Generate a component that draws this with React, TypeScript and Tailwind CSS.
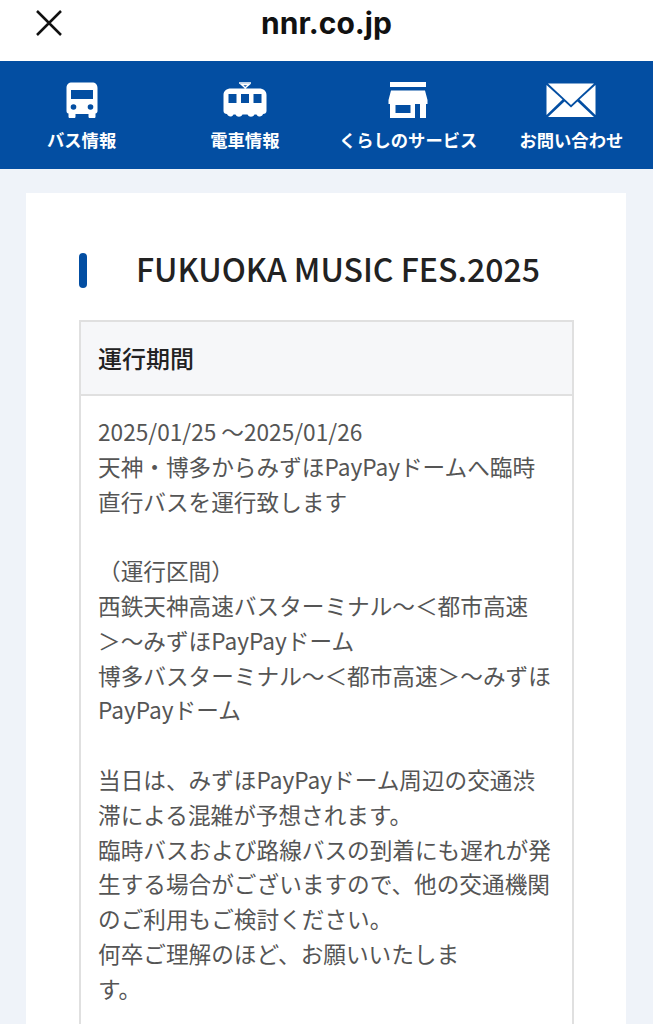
import React from "react";

const cjk = "font-['Noto_Sans_CJK_JP','Noto_Sans',sans-serif]";

function Bus() {
  return (
    <svg width="32" height="37" viewBox="0 0 32 37" fill="none">
      <path d="M6 0.500H26C29.500 0.500 31.500 2.500 31.500 6V29C31.500 30.500 30.500 31.500 29.500 31.500V34.500C29.500 35.500 29 36 28 36H24C23 36 22.500 35.500 22.500 34.500V32H9.500V34.500C9.500 35.500 9 36 8 36H4C3 36 2.500 35.500 2.500 34.500V31.500C1.200 31.500 0.500 30.500 0.500 29V6C0.500 2.500 2.500 0.500 6 0.500Z" fill="white" />
      <rect x="5" y="8" width="22" height="9" fill="#034ea2" />
      <circle cx="7.500" cy="25" r="2.800" fill="#034ea2" />
      <circle cx="24.500" cy="25" r="2.800" fill="#034ea2" />
    </svg>
  );
}

function Train() {
  return (
    <svg width="44" height="37" viewBox="0 0 44 37" fill="none">
      <path d="M21.500 6.500L26 2.500H18.500L23 6.500" stroke="white" strokeWidth="1.500" />
      <path d="M16 1H28" stroke="white" strokeWidth="1.500" />
      <path d="M8 6.500H36C40.500 6.500 43.500 9 43.500 13V29C43.500 31 42 32 40 32C39.500 35 35 35.500 33.500 32.500H31.500C30 35.500 26 35.500 24.500 32.500H19.500C18 35.500 14 35.500 12.500 32.500H10.500C9 35.500 5 35 4 32C2 32 0.500 31 0.500 29V13C0.500 9 3.500 6.500 8 6.500Z" fill="white" />
      <rect x="5.500" y="12" width="8" height="9" fill="#034ea2" />
      <rect x="18" y="12" width="8" height="9" fill="#034ea2" />
      <rect x="30.500" y="12" width="8" height="9" fill="#034ea2" />
    </svg>
  );
}

function Shop() {
  return (
    <svg width="40" height="37" viewBox="0 0 40 37" fill="none">
      <rect x="2" y="0" width="36" height="5" fill="white" />
      <path d="M3 8.500H37L39.500 18V22H38V36H32V22H3.500V36H2V22H0.500V18Z" fill="white" />
      <path d="M2 22H27V36H2Z" fill="white" />
      <rect x="7.500" y="23" width="15" height="8" fill="#034ea2" />
    </svg>
  );
}

function Mail() {
  return (
    <svg width="50" height="35" viewBox="0 0 50 35" fill="none">
      <path d="M2 0.500H48L25 22Z" fill="white" />
      <path d="M0.500 2V32L16.500 16.500Z" fill="white" />
      <path d="M49.500 2V32L33.500 16.500Z" fill="white" />
      <path d="M2 34L18.500 18.500L25 24.500L31.500 18.500L48 34Z" fill="white" />
    </svg>
  );
}

const items = [
  { label: "バス情報", icon: <Bus /> },
  { label: "電車情報", icon: <Train /> },
  { label: "くらしのサービス", icon: <Shop /> },
  { label: "お問い合わせ", icon: <Mail /> },
];

const lines = [
  "2025/01/25 〜2025/01/26",
  "天神・博多からみずほPayPayドームへ臨時",
  "直行バスを運行致します",
  "",
  "（運行区間）",
  "西鉄天神高速バスターミナル〜＜都市高速",
  "＞〜みずほPayPayドーム",
  "博多バスターミナル〜＜都市高速＞〜みずほ",
  "PayPayドーム",
  "",
  "当日は、みずほPayPayドーム周辺の交通渋",
  "滞による混雑が予想されます。",
  "臨時バスおよび路線バスの到着にも遅れが発",
  "生する場合がございますので、他の交通機関",
  "のご利用もご検討ください。",
  "何卒ご理解のほど、お願いいたしま",
  "す。",
];

export default function App() {
  return (
    <div className={`h-[1024px] w-[653px] overflow-hidden bg-[#eff3f9] ${cjk}`}>
      <header className="relative flex h-[61px] items-center justify-center bg-white">
        <svg className="absolute left-[36px] top-[10px]" width="26" height="26" viewBox="0 0 26 26" fill="none">
          <path d="M1 1L25 25M25 1L1 25" stroke="#111" strokeWidth="2.500" />
        </svg>
        <span className="-mt-[15px] font-['Inter',sans-serif] text-[30px] font-bold leading-none text-[#111]">nnr.co.jp</span>
      </header>

      <nav className="grid h-[108px] grid-cols-4 bg-[#034ea2]">
        {items.map((it) => (
          <div key={it.label} className="flex flex-col items-center">
            <div className="mt-[21px] flex h-[37px] items-center justify-center">{it.icon}</div>
            <span className="mt-[9px] whitespace-nowrap text-[17.300px] font-bold leading-[24px] text-white">{it.label}</span>
          </div>
        ))}
      </nav>

      <main className="mx-[26px] mt-[24px] w-[600px] bg-white px-[53px] pt-[60px]">
        <div className="flex h-[35px] items-center">
          <span className="h-[35px] w-[8px] rounded-full bg-[#034ea2]" />
          <h1 className="-mt-[6px] ml-[49px] whitespace-nowrap text-[32px] font-medium leading-none text-[#222]">FUKUOKA MUSIC FES.2025</h1>
        </div>
        <section className="mt-[32px] w-[495px] border-2 border-[#e0e0e0]">
          <div className="flex h-[74px] items-center border-b-2 border-[#e0e0e0] bg-[#f6f7f9] px-[17px]">
            <span className="text-[24px] font-medium text-[#222]">運行期間</span>
          </div>
          <div className="px-[17px] pb-[17px] pt-[19px] text-[22.650px] font-normal leading-[34.800px] text-[#555]">
            {lines.map((l, i) => (
              <div key={i} className="h-[34.800px] whitespace-nowrap">{l}</div>
            ))}
          </div>
        </section>
      </main>
    </div>
  );
}
